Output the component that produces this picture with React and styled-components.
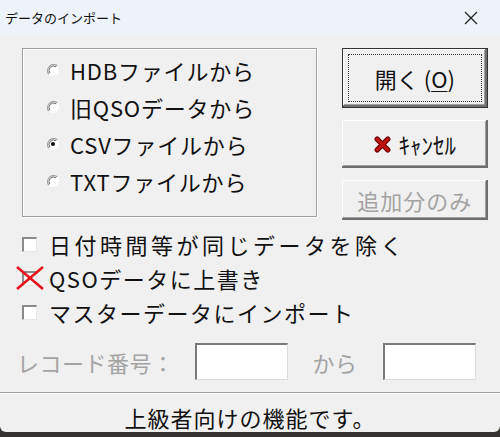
import React from 'react';
import styled, { createGlobalStyle } from 'styled-components';

const Global = createGlobalStyle`
  html, body {
    margin: 0;
    padding: 0;
    background: #35332f;
  }
  body {
    font-family: "Noto Sans CJK JP", "Noto Sans", sans-serif;
  }
`;

const Page = styled.div`
  width: 500px;
  height: 437px;
  background: #35332f;
`;

const Window = styled.div`
  width: 500px;
  height: 432px;
  background: #f0f0f0;
  display: flex;
  flex-direction: column;
  border-radius: 0 0 6px 6px;
  overflow: hidden;
  color: #111;
`;

const TitleBar = styled.div`
  height: 35px;
  flex: none;
  display: flex;
  align-items: center;
  justify-content: space-between;
  padding: 0 22px 0 5px;
  background: #eef2f9;
  font-size: 13px;
  color: #111;
`;

const Body = styled.div`
  flex: 1;
  min-height: 0;
  padding: 13px 12px 0 22px;
  display: flex;
  flex-direction: column;
`;

const TopRow = styled.div`
  display: flex;
  align-items: flex-start;
`;

const GroupBox = styled.div`
  width: 284px;
  height: 165px;
  border: 1px solid #a0a0a0;
  box-shadow: inset 1px 1px #fff, 1px 1px #fff;
  display: flex;
  flex-direction: column;
  padding: 2px 0 0 23px;
  box-sizing: content-box;
`;

const RadioRow = styled.label`
  height: 37px;
  display: flex;
  align-items: center;
  gap: 10px;
  font-size: 22px;
  letter-spacing: 0.8px;
`;

const ButtonColumn = styled.div`
  margin-left: 25px;
  width: 154px;
  display: flex;
  flex-direction: column;
  gap: 12px;
`;

const Button = styled.button`
  height: ${p => p.$h}px;
  width: 100%;
  border: none;
  background: #f0f0f0;
  font-family: inherit;
  font-size: 22px;
  letter-spacing: ${p => (p.disabled ? 1 : 0)}px;
  color: ${p => (p.disabled ? '#a3a3a3' : '#111')};
  display: flex;
  align-items: center;
  justify-content: center;
  gap: 8px;
  padding: 0;
  position: relative;
  box-shadow: inset -2px -2px #6e6e6e, inset 1px 1px #fff, inset -3px -3px #a0a0a0;
  ${p =>
    p.$default &&
    `
    outline: 1px solid #333;
    outline-offset: -1px;
    box-shadow: inset -3px -3px #6e6e6e, inset 2px 2px #fff, inset -4px -4px #a0a0a0;
  `}
`;

const FocusRect = styled.span`
  position: absolute;
  inset: 6px;
  border: 1px dotted #333;
  pointer-events: none;
`;

const Half = styled.span`
  font-size: 23px;
`;

const Under = styled.span`
  text-decoration: underline;
  text-underline-offset: 3px;
  text-decoration-thickness: 1px;
`;

const CheckList = styled.div`
  margin-top: 7px;
  display: flex;
  flex-direction: column;
`;

const CheckRow = styled.label`
  height: 34px;
  display: flex;
  align-items: center;
  gap: 12px;
  font-size: 22px;
  letter-spacing: ${p => p.$ls}px;
  position: relative;
`;

const Box = styled.span`
  width: 15px;
  height: 15px;
  flex: none;
  box-sizing: border-box;
  background: #fff;
  border-top: 2px solid #8a8a8a;
  border-left: 2px solid #8a8a8a;
  border-right: 1px solid #e8e8e8;
  border-bottom: 1px solid #e8e8e8;
`;

const Cross = styled.svg`
  position: absolute;
  left: -7px;
  top: 5px;
`;

const RecordRow = styled.div`
  margin-top: 14px;
  margin-left: -5px;
  display: flex;
  align-items: center;
  font-size: 22px;
  letter-spacing: 0.5px;
  color: #a3a3a3;
`;

const Field = styled.div`
  width: 93px;
  height: 37px;
  box-sizing: border-box;
  background: #fff;
  border-top: 2px solid #7a7a7a;
  border-left: 2px solid #7a7a7a;
  border-right: 1px solid #dcdcdc;
  border-bottom: 1px solid #dcdcdc;
  margin-left: ${p => p.$ml}px;
`;

const Label = styled.span`
  margin-left: ${p => p.$ml || 0}px;
`;

const StatusBar = styled.div`
  height: 40px;
  flex: none;
  box-sizing: border-box;
  padding-top: 8px;
  border-top: 1px solid #a0a0a0;
  box-shadow: inset 0 1px #fff;
  display: flex;
  align-items: center;
  justify-content: center;
  font-size: 22px;
  letter-spacing: 1px;
  color: #111;
`;

const Radio = ({ checked }) => (
  <svg width="14" height="14" viewBox="0 0 14 14">
    <circle cx="7" cy="7" r="6" fill="#fff" />
    <path d="M11.2 2.8 A6 6 0 0 0 2.8 11.2" fill="none" stroke="#9a9a9a" strokeWidth="1.2" />
    <path d="M10.2 3.8 A4.6 4.6 0 0 0 3.8 10.2" fill="none" stroke="#6a6a6a" strokeWidth="1" />
    {checked && <circle cx="7" cy="7" r="2" fill="#111" />}
  </svg>
);

const CancelIcon = () => (
  <svg width="17" height="17" viewBox="0 0 16 16">
    <path d="M3 3 L13 13 M13 3 L3 13" stroke="#6d0000" strokeWidth="5" strokeLinecap="round" />
    <path d="M3 3 L13 13 M13 3 L3 13" stroke="#c01010" strokeWidth="3" strokeLinecap="round" />
  </svg>
);

const CloseIcon = () => (
  <svg width="14" height="14" viewBox="0 0 14 14">
    <path d="M1 1 L13 13 M13 1 L1 13" stroke="#222" strokeWidth="1.3" />
  </svg>
);

const sources = ['HDBファイルから', '旧QSOデータから', 'CSVファイルから', 'TXTファイルから'];

export default function App() {
  return (
    <Page>
      <Global />
      <Window>
        <TitleBar>
          <span>データのインポート</span>
          <CloseIcon />
        </TitleBar>
        <Body>
          <TopRow>
            <GroupBox>
              {sources.map((s, i) => (
                <RadioRow key={s}>
                  <Radio checked={i === 2} />
                  {s}
                </RadioRow>
              ))}
            </GroupBox>
            <ButtonColumn>
              <Button $h={60} $default>
                <FocusRect />
                <span>
                  開く (<Under>O</Under>)
                </span>
              </Button>
              <Button $h={48}>
                <CancelIcon />
                <Half>ｷｬﾝｾﾙ</Half>
              </Button>
              <Button $h={40} disabled>追加分のみ</Button>
            </ButtonColumn>
          </TopRow>
          <CheckList>
            <CheckRow $ls={3.5}>
              <Box />
              日付時間等が同じデータを除く
            </CheckRow>
            <CheckRow $ls={1.5}>
              <Box />
              QSOデータに上書き
              <Cross width="30" height="24" viewBox="0 0 30 24">
                <path d="M2 1 L28 23 M28 1 L2 23" stroke="#e8101a" strokeWidth="2.6" />
              </Cross>
            </CheckRow>
            <CheckRow $ls={1.5}>
              <Box />
              マスターデータにインポート
            </CheckRow>
          </CheckList>
          <RecordRow>
            <Label>レコード番号：</Label>
            <Field $ml={20} />
            <Label $ml={25}>から</Label>
            <Field $ml={25} />
          </RecordRow>
        </Body>
        <StatusBar>上級者向けの機能です。</StatusBar>
      </Window>
    </Page>
  );
}
